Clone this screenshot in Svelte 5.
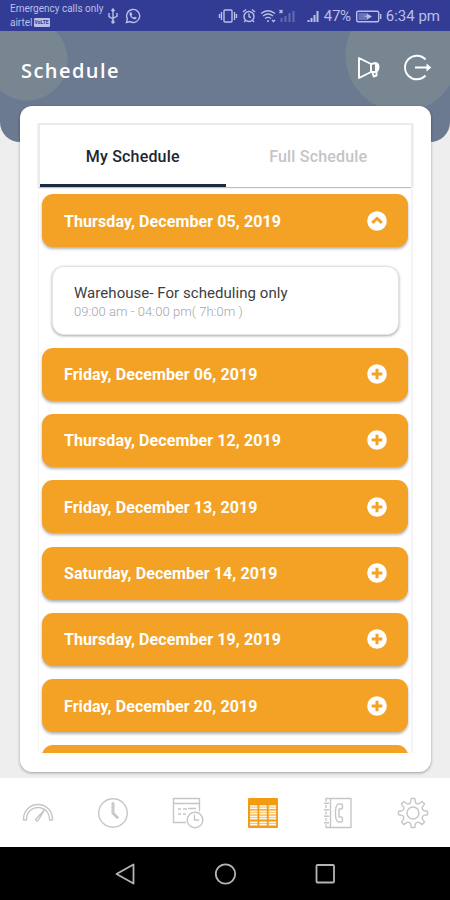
<script lang="ts">
  type Day = { label: string; shift?: { title: string; time: string } };

  const days: Day[] = [
    {
      label: "Thursday, December 05, 2019",
      shift: { title: "Warehouse- For scheduling only", time: "09:00 am - 04:00 pm( 7h:0m )" },
    },
    { label: "Friday, December 06, 2019" },
    { label: "Thursday, December 12, 2019" },
    { label: "Friday, December 13, 2019" },
    { label: "Saturday, December 14, 2019" },
    { label: "Thursday, December 19, 2019" },
    { label: "Friday, December 20, 2019" },
    { label: "" },
  ];

  let open = $state(0);
  let tab = $state("mine");
</script>

<div class="screen">
  <div class="status">
    <div class="carrier">
      <span>Emergency calls only</span>
      <span class="operator">airtel<b>VoLTE</b></span>
    </div>
    <svg class="usb" width="12" height="16" viewBox="0 0 12 16">
      <path d="M6 1.5V14M2 5v3.5l4 2.5M10 5v3l-4 2.5M4.5 3L6 1l1.5 2" />
      <circle cx="6" cy="14" r="1" />
    </svg>
    <svg class="whatsapp" width="16" height="16" viewBox="0 0 16 16">
      <path d="M1.5 14.5l.9-3.6A6.5 6.5 0 1 1 5 13.6z" />
      <path d="M5.2 4.2c-1.5 1.4-.3 4 1.5 5.5s3.7 2.2 4.9.9l-.2-1-1.9-.9-1 .9c-.9-.4-1.7-1.300-2-2.100l.8-.9-.7-2.200z" class="solid" />
    </svg>
    <div class="indicators">
      <svg width="80" height="18" viewBox="0 0 80 18">
        <rect x="8" y="3" width="8" height="12" rx="1" />
        <path d="M5.5 5v8M18.5 5v8M3.500 7v4M20.500 7v4" />
        <circle cx="33" cy="9.5" r="5" />
        <path d="M33 6.5v3.2l2 1M27 5l3-2.5M39 5l-3-2.5M29.500 13.500l-1.500 1.500M36.500 13.500l1.500 1.500" />
        <path d="M45 6.500q7-5.500 14 0M47 9q5-4 10 0M49 11.500q3-2.300 6 0" />
        <circle cx="52" cy="14" r="1" class="solid" />
        <path d="M56 13l1.500 1.500L59 13" />
        <path d="M63.500 3l3 3M66.500 3l-3 3" />
        <path class="faint" d="M65.500 15v-4M69.500 15V9M73.500 15V6M77.500 15V4" />
      </svg>
      <svg class="signal" width="13" height="18" viewBox="0 0 13 18">
        <path class="bars" d="M1.500 15v-2M4.500 15v-4M7.500 15V8M10.500 15V4" />
      </svg>
      <span class="percent">47%</span>
      <svg class="battery" width="26" height="18" viewBox="0 0 26 18">
        <rect x=".7" y="4.2" width="22" height="10.6" rx="1.5" />
        <rect x="2.5" y="6" width="9" height="7" class="charge" />
        <path d="M24.7 7v5" />
        <path class="solid" d="M7 9l4-.5V6.5l5 3-5 3V10z" />
      </svg>
      <span class="time">6:34 pm</span>
    </div>
  </div>

  <header>
    <h1>Schedule</h1>
    <button aria-label="Announcements">
      <svg width="24" height="24" viewBox="0 0 24 24">
        <path d="M2 2v20l12-6V8zM14 8l5-1v9h-5M15.500 16.500l1.200 4 2.800-1v-4" />
        <path d="M20.500 7.500q2.500 3.500 0 7.500z" class="thick" />
      </svg>
    </button>
    <button aria-label="Log out">
      <svg width="28" height="28" viewBox="0 0 28 28">
        <path d="M21.500 5.500a11.800 11.800 0 1 0 0 16M11 13.500h14" />
        <path d="M22.500 9.500l4.800 4-4.800 4z" class="solid" />
      </svg>
    </button>
  </header>

  <main>
    <div class="panel">
      <div class="tabs">
        <button class:active={tab === "mine"} onclick={() => (tab = "mine")}>My Schedule</button>
        <button class:active={tab === "full"} onclick={() => (tab = "full")}>Full Schedule</button>
      </div>
      <div class="days">
        {#each days as day, i}
          <button class="day" onclick={() => (open = open === i ? -1 : i)}>
            <span>{day.label}</span>
            <svg width="20" height="20" viewBox="0 0 20 20">
              <circle cx="10" cy="10" r="9.8" />
              {#if open === i}
                <path d="M5.2 11.8L10 7.5l4.8 4.3" />
              {:else}
                <path d="M10 4.7v10.6M4.7 10h10.6" />
              {/if}
            </svg>
          </button>
          {#if open === i && day.shift}
            <div class="shift">
              <div class="title">{day.shift.title}</div>
              <div class="hours">{day.shift.time}</div>
            </div>
          {/if}
        {/each}
      </div>
    </div>
  </main>

  <nav class="menu">
    <button aria-label="Dashboard">
      <svg viewBox="0 0 32 32">
        <path d="M1.500 23v-1a14.500 14.500 0 0 1 29 0v1h-3v-1a11.500 11.500 0 0 0-23 0v1z" />
        <path d="M13.500 22.500L22.500 13l-6.500 10.500q-2 1-2.500-1z" />
      </svg>
    </button>
    <button aria-label="Clock">
      <svg viewBox="0 0 32 32">
        <circle cx="16" cy="16" r="14.3" />
        <path d="M15.2 6h1.6v10l4.4 4.3-1 1-5-4.8z" />
      </svg>
    </button>
    <button aria-label="Time off">
      <svg viewBox="0 0 32 32">
        <path d="M14 25.500H1.500V1.500h26v13M1.500 6.500h26" />
        <path d="M6 12h3M11 12h4M16 11.500h8M6 17h3M11 17h3" />
        <circle cx="23" cy="23" r="7.8" />
        <path d="M22.500 17.500V23H27" />
      </svg>
    </button>
    <button aria-label="Schedule" class="current">
      <svg viewBox="0 0 32 32">
        <rect x="1" y="1" width="30" height="30" rx="1" class="solid" />
        <path
          class="cells"
          d="M3 10.200h7.500M12.300 10.200h7.500M21.600 10.200h7.500M3 15.400h7.500M12.300 15.400h7.500M21.600 15.400h7.500M3 20.600h7.500M12.300 20.600h7.500M21.600 20.600h7.500M3 26.500h7.500M12.300 26.500h7.500M21.600 26.500h7.500"
        />
        <path class="rule" d="M3 10.200h26M3 15.400h26M3 20.600h26M3 26.500h26" />
      </svg>
    </button>
    <button aria-label="Contacts">
      <svg viewBox="0 0 32 32">
        <path d="M4 4.500v-3h25v29H4v-3M4 8v3M4 14.500v3M4 21v3M8.500 1.500v29" />
        <path d="M2 6.200h5M2 12.700h5M2 19.200h5M2 25.700h5" />
        <path d="M16 7h3q1.500 0 1.500 1.500v2Q20.500 12 19 12h-2v8h2q1.500 0 1.500 1.500v2q0 1.500-1.500 1.500h-3q-2.500-1.500-2.500-9T16 7z" />
      </svg>
    </button>
    <button aria-label="Settings">
      <svg viewBox="0 0 32 32">
        <path
          d="M14.200 1.500h3.600l.6 3.500q.3 1.400 1.600 1.800 1.300.5 2.400-.3l2.700-2 2.500 2.500-2 2.700q-.8 1.100-.3 2.400.4 1.300 1.800 1.600l3.400.6v3.500l-3.400.6q-1.400.3-1.800 1.600-.5 1.300.3 2.400l2 2.700-2.500 2.500-2.700-2q-1.100-.8-2.400-.3-1.300.4-1.600 1.800l-.6 3.400h-3.600l-.6-3.400q-.3-1.400-1.600-1.800-1.300-.5-2.400.3l-2.700 2-2.500-2.500 2-2.700q.8-1.100.3-2.400-.4-1.300-1.800-1.600l-3.400-.6v-3.500l3.400-.6q1.400-.3 1.800-1.600.5-1.300-.3-2.400l-2-2.700 2.500-2.500 2.700 2q1.100.8 2.400.3 1.300-.4 1.600-1.800z"
        />
        <circle cx="16" cy="16" r="6" />
      </svg>
    </button>
  </nav>

  <div class="system">
    <svg width="22" height="24" viewBox="0 0 22 24"><path d="M19.500 2.500v19L2.500 12z" /></svg>
    <svg width="24" height="24" viewBox="0 0 24 24"><circle cx="12.5" cy="12" r="9.7" /></svg>
    <svg width="22" height="24" viewBox="0 0 22 24"><rect x="2.5" y="3" width="17.5" height="17.5" rx="1" /></svg>
  </div>
</div>

<style>
  :global(body) {
    margin: 0;
    background: #eee;
  }

  .screen {
    width: 450px;
    height: 900px;
    display: flex;
    flex-direction: column;
    overflow: hidden;
    background: #eee;
    font-family: Roboto, sans-serif;
  }

  button {
    padding: 0;
    border: 0;
    background: none;
    font: inherit;
    cursor: pointer;
  }

  svg {
    display: block;
    fill: none;
    stroke: currentColor;
    flex-shrink: 0;
  }

  .solid {
    fill: currentColor;
    stroke: none;
  }

  .status {
    flex: none;
    height: 31px;
    display: flex;
    align-items: center;
    box-sizing: border-box;
    padding: 0 10px;
    background: #333c95;
    color: #b9bfe8;
  }

  .status svg {
    stroke-width: 1.4;
  }

  .carrier {
    display: flex;
    flex-direction: column;
    width: 97px;
    font-size: 10px;
    line-height: 14px;
    white-space: nowrap;
  }

  .operator {
    display: flex;
    align-items: center;
    gap: 1px;
  }

  .operator b {
    padding: 0 1px;
    border-radius: 1px;
    background: #b9bfe8;
    color: #333c95;
    font-size: 5px;
    line-height: 9px;
  }

  .whatsapp {
    margin-left: 6px;
  }

  .indicators {
    margin-left: auto;
    display: flex;
    align-items: center;
  }

  .indicators .faint {
    stroke-width: 2;
    opacity: 0.35;
  }

  .indicators .bars {
    stroke-width: 2;
  }

  .signal {
    margin-left: 11px;
  }

  .percent {
    margin-left: 4px;
    font-size: 15px;
    letter-spacing: -0.3px;
  }

  .battery {
    margin: 0 4px 0 5px;
  }

  .charge {
    fill: currentColor;
    stroke: none;
    opacity: 0.4;
  }

  .time {
    font-size: 15px;
  }

  header {
    flex: none;
    height: 111px;
    box-sizing: border-box;
    display: flex;
    align-items: flex-start;
    padding: 22px 18px 0 21px;
    border-radius: 0 0 20px 20px;
    background:
      radial-gradient(circle at 27px 29px, #788692 40px, transparent 41px),
      radial-gradient(circle at 402px 24px, #788692 56px, transparent 57px),
      #6b7991;
    color: #fff;
  }

  h1 {
    flex: 1;
    margin: 3px 0 0;
    font: 600 20px/30px "Open Sans", sans-serif;
    letter-spacing: 1.45px;
  }

  header button {
    height: 30px;
    color: #fff;
  }

  header svg {
    stroke-width: 1.9;
    stroke-linejoin: round;
  }

  header button + button {
    margin-left: 23px;
  }

  header .thick {
    fill: currentColor;
    stroke-width: 1.5;
  }

  main {
    flex: none;
    height: 666px;
    box-sizing: border-box;
    margin: -36px 19px 6px 20px;
    padding: 17px 18px 19px;
    border-radius: 12px;
    background: #fff;
    box-shadow: 0 1px 3px rgba(0, 0, 0, 0.35);
  }

  .panel {
    height: 100%;
    display: flex;
    flex-direction: column;
  }

  .tabs {
    flex: none;
    display: grid;
    grid-template-columns: 1fr 1fr;
    height: 64px;
    box-sizing: border-box;
    border: 2px solid #ebebeb;
    border-bottom: 0;
    box-shadow: 0 1px 1px rgba(0, 0, 0, 0.25);
  }

  .tabs button {
    padding-top: 3px;
    border-bottom: 3px solid transparent;
    color: #c4c4c6;
    font-size: 16px;
    font-weight: 500;
    letter-spacing: 0.18px;
  }

  .tabs .active {
    border-color: #1c2b42;
    color: #20262f;
  }

  .days {
    flex: 1;
    min-height: 0;
    overflow: hidden;
    padding: 7px 3px 0 3px;
    border: solid #f4f4f4;
    border-width: 0 2px 0 1px;
  }

  .day {
    width: 100%;
    height: 53px;
    display: flex;
    align-items: center;
    justify-content: space-between;
    box-sizing: border-box;
    margin-bottom: 13.3px;
    padding: 1px 21px 0 22px;
    border-radius: 11px;
    background: #f4a226;
    box-shadow: 0 2px 3px rgba(0, 0, 0, 0.3);
    color: #fff;
    font-size: 16px;
    font-weight: 700;
    letter-spacing: 0.09px;
  }

  .day svg {
    margin-top: -1px;
  }

  .day circle {
    fill: #fff;
    stroke: none;
  }

  .day path {
    stroke: #f4a226;
    stroke-width: 3;
  }

  .shift {
    height: 69px;
    box-sizing: border-box;
    margin: 18.7px 9px 13px 10px;
    padding: 17px 21px;
    border: 1px solid #e4e4e4;
    border-radius: 12px;
    background: #fff;
    box-shadow: 0 1px 3px rgba(0, 0, 0, 0.35);
  }

  .title {
    color: #3d3d43;
    font-size: 15px;
    line-height: 19px;
    letter-spacing: 0.05px;
  }

  .hours {
    color: #a5a5a8;
    font-size: 13px;
    font-weight: 300;
    line-height: 17px;
    letter-spacing: 0.05px;
  }

  .menu {
    flex: none;
    height: 69px;
    display: grid;
    grid-template-columns: repeat(6, 1fr);
    background: #fff;
  }

  .menu button {
    display: flex;
    align-items: center;
    justify-content: center;
    color: #c6c6c8;
  }

  .menu svg {
    width: 32px;
    height: 32px;
    stroke-width: 1.4;
    stroke-linejoin: round;
  }

  .menu .current {
    color: #f39c12;
  }

  .menu .cells {
    stroke: #fff8ea;
    stroke-width: 4;
  }

  .menu .rule {
    stroke-width: 0.8;
    opacity: 0.7;
  }

  .system {
    flex: 1;
    display: flex;
    align-items: center;
    justify-content: center;
    gap: 77px;
    background: #000;
    color: #b5b5b5;
  }

  .system svg {
    stroke-width: 1.8;
    stroke-linejoin: round;
  }
</style>
